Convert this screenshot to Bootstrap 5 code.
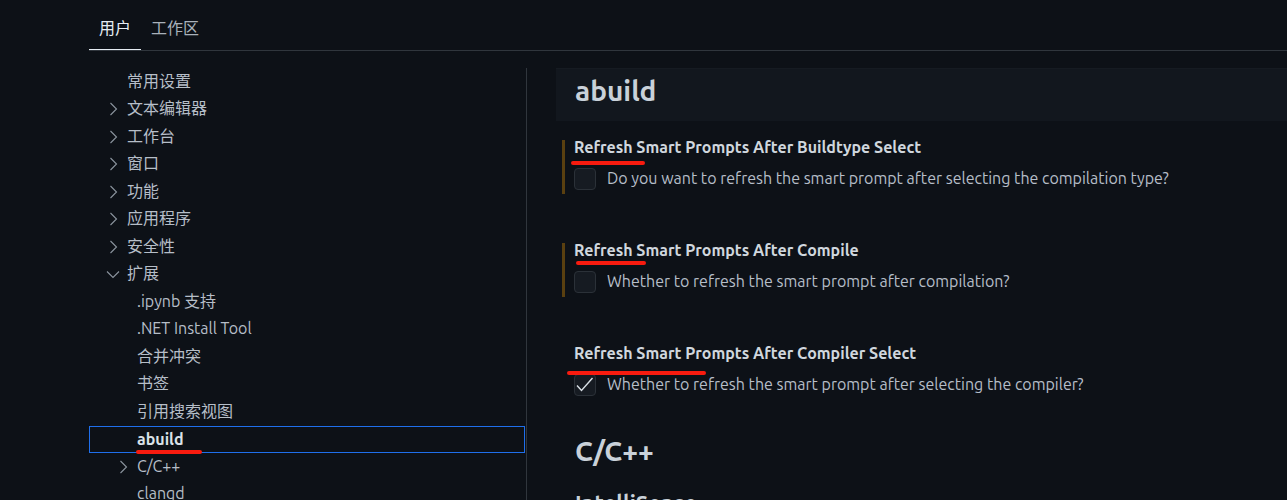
<!DOCTYPE html>
<html lang="zh-CN" data-bs-theme="dark">
<head>
<meta charset="utf-8">
<meta name="viewport" content="width=device-width, initial-scale=1">
<title>设置</title>
<link href="https://cdn.jsdelivr.net/npm/bootstrap@5.3.0/dist/css/bootstrap.min.css" rel="stylesheet">
<style>
  body { background: #0d1117; color: #b6bec8; font: 16px/20px Ubuntu, "Noto Sans", "Noto Sans CJK SC", sans-serif; }
  .settings-head { height: 51px; flex: none; margin-left: 89px; border-bottom: 1px solid #30363d; }
  .scope-tab { padding: 6px 10px 0; border: 0; border-bottom: 1px solid transparent; background: none; color: #a9b1ba; }
  .scope-tab.active { color: #e6edf3; border-bottom-color: #e6edf3; }
  .settings-body { min-height: 0; padding-top: 17px; }
  .toc { width: 437px; margin-left: 89px; flex: none; }
  .toc a { height: 27px; padding: 0 0 3px 16px; color: inherit; border: 1px solid transparent; }
  .toc li:nth-child(odd) a { height: 28px; }
  .toc .nested a { padding-left: 26px; }
  .toc .twistie { width: 14px; height: 14px; margin: 2px 7px 0 0; flex: none; fill: none; stroke: #8b949e; stroke-width: 1.1; }
  .toc a.active { height: 27px; width: 436px; padding-bottom: 2px; border-color: #1f6feb; color: #dbe2e9; font-weight: 700; }
  .pane { border-left: 1px solid #30363d; padding-left: 29px; min-width: 0; }
  .group-title { margin: 0; padding: 6px 19px 0; height: 53px; font-size: 28px; line-height: 32px; font-weight: 700; color: #c9d1d9; }
  .group-title.current { background: #12171e; border-top: 1px solid #161b22; margin-bottom: 19px; }
  .setting { height: 54px; margin: 0 0 49px 6px; padding-left: 9px; border-left: 3px solid transparent; }
  .setting.modified { border-left-color: #5a4010; }
  .setting:last-of-type { margin-bottom: 29px; }
  .setting h3 { margin: 0 0 6px; font-size: 16px; line-height: 14px; height: 22px; font-weight: 700; color: #d0d7de; }
  .setting .form-check-input { width: 22px; height: 22px; margin: 0; border: 1px solid #2b3138; border-radius: 4px; background-color: #161b22; }
  .setting .form-check-input:checked { background-size: 22px; background-image: url("data:image/svg+xml,%3Csvg xmlns='http://www.w3.org/2000/svg' viewBox='0 0 22 22'%3E%3Cpath d='M3 11.5l4.500 5L18.500 4' fill='none' stroke='%23d9e0e6' stroke-width='1.4'/%3E%3C/svg%3E"); }
  .setting label { margin-left: 11px; line-height: 20px; }
  .sub-title { margin: 0; padding: 9px 19px 0; font-size: 22px; line-height: 24px; font-weight: 700; color: #c9d1d9; }
  /* red pen strokes laid over the text */
  .pen { position: absolute; height: 4px; border-radius: 2px; background: #f81b0f; z-index: 2; }
  .pen-nav { left: 46px; bottom: -2px; width: 66px; }
  .pen-one { left: -3px; top: 21px; width: 74px; }
  .pen-two { left: 2px; top: 18px; width: 70px; }
  .pen-three { left: -7px; top: 25px; width: 139px; }
</style>
</head>
<body>
<svg class="d-none"><symbol id="right" viewBox="0 0 14 14"><path d="M4.500 1l6 6-6 6"/></symbol><symbol id="down" viewBox="0 0 14 14"><path d="M1 4.500l6 6 6-6"/></symbol></svg>
<div class="vh-100 d-flex flex-column overflow-hidden">
  <header class="settings-head d-flex">
    <button class="scope-tab active" type="button">用户</button>
    <button class="scope-tab" type="button">工作区</button>
  </header>
  <div class="settings-body d-flex flex-fill overflow-hidden">
    <nav class="toc" aria-label="设置目录">
      <ul class="list-unstyled m-0">
        <li><a class="d-flex align-items-center text-decoration-none" href="#"><span class="twistie"></span>常用设置</a></li>
        <li><a class="d-flex align-items-center text-decoration-none" href="#"><svg class="twistie"><use href="#right"/></svg>文本编辑器</a></li>
        <li><a class="d-flex align-items-center text-decoration-none" href="#"><svg class="twistie"><use href="#right"/></svg>工作台</a></li>
        <li><a class="d-flex align-items-center text-decoration-none" href="#"><svg class="twistie"><use href="#right"/></svg>窗口</a></li>
        <li><a class="d-flex align-items-center text-decoration-none" href="#"><svg class="twistie"><use href="#right"/></svg>功能</a></li>
        <li><a class="d-flex align-items-center text-decoration-none" href="#"><svg class="twistie"><use href="#right"/></svg>应用程序</a></li>
        <li><a class="d-flex align-items-center text-decoration-none" href="#"><svg class="twistie"><use href="#right"/></svg>安全性</a></li>
        <li><a class="d-flex align-items-center text-decoration-none" href="#"><svg class="twistie"><use href="#down"/></svg>扩展</a></li>
        <li class="nested"><a class="d-flex align-items-center text-decoration-none" href="#"><span class="twistie"></span>.ipynb 支持</a></li>
        <li class="nested"><a class="d-flex align-items-center text-decoration-none" href="#"><span class="twistie"></span>.NET Install Tool</a></li>
        <li class="nested"><a class="d-flex align-items-center text-decoration-none" href="#"><span class="twistie"></span>合并冲突</a></li>
        <li class="nested"><a class="d-flex align-items-center text-decoration-none" href="#"><span class="twistie"></span>书签</a></li>
        <li class="nested"><a class="d-flex align-items-center text-decoration-none" href="#"><span class="twistie"></span>引用搜索视图</a></li>
        <li class="nested"><a class="active position-relative d-flex align-items-center text-decoration-none" href="#"><span class="twistie"></span>abuild<span class="pen pen-nav"></span></a></li>
        <li class="nested"><a class="d-flex align-items-center text-decoration-none" href="#"><svg class="twistie"><use href="#right"/></svg>C/C++</a></li>
        <li class="nested"><a class="d-flex align-items-center text-decoration-none" href="#"><span class="twistie"></span>clangd</a></li>
      </ul>
    </nav>
    <main class="pane flex-fill">
      <h2 class="group-title current">abuild</h2>
      <section class="setting modified">
        <h3 class="position-relative">Refresh Smart Prompts After Buildtype Select<span class="pen pen-one"></span></h3>
        <div class="d-flex"><input class="form-check-input" type="checkbox" id="s1"><label for="s1">Do you want to refresh the smart prompt after selecting the compilation type?</label></div>
      </section>
      <section class="setting modified">
        <h3 class="position-relative">Refresh Smart Prompts After Compile<span class="pen pen-two"></span></h3>
        <div class="d-flex"><input class="form-check-input" type="checkbox" id="s2"><label for="s2">Whether to refresh the smart prompt after compilation?</label></div>
      </section>
      <section class="setting">
        <h3 class="position-relative">Refresh Smart Prompts After Compiler Select<span class="pen pen-three"></span></h3>
        <div class="d-flex"><input class="form-check-input" type="checkbox" id="s3" checked><label for="s3">Whether to refresh the smart prompt after selecting the compiler?</label></div>
      </section>
      <h2 class="group-title">C/C++</h2>
      <h3 class="sub-title">IntelliSense</h3>
    </main>
  </div>
</div>
<script src="https://cdn.jsdelivr.net/npm/bootstrap@5.3.0/dist/js/bootstrap.bundle.min.js"></script>
</body>
</html>
